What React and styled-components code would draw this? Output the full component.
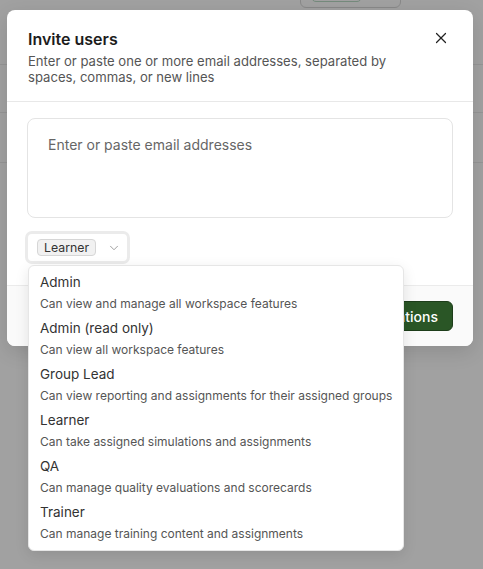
import React from 'react';
import styled, { createGlobalStyle } from 'styled-components';
import { X, ChevronDown } from 'lucide-react';

const GlobalStyle = createGlobalStyle`
  * { box-sizing: border-box; }
  body {
    margin: 0;
    font-family: Inter, "Noto Sans", "Liberation Sans", sans-serif;
    -webkit-font-smoothing: antialiased;
  }
`;

const Page = styled.div`
  position: relative;
  width: 483px;
  height: 569px;
  overflow: hidden;
  background: #fff;
`;

const TopBar = styled.div`
  display: flex;
  justify-content: flex-end;
  padding-right: 82px;
  margin-top: -28px;
`;

const ToolbarBox = styled.div`
  width: 101px;
  height: 36px;
  border: 1px solid #d9d9d9;
  border-radius: 6px;
  padding: 0 0 5px 10px;
  display: flex;
  align-items: flex-end;
`;

const StatusPill = styled.div`
  width: 51px;
  height: 20px;
  border: 1px solid #b9dcc4;
  border-radius: 5px;
`;

const TableRow = styled.div`
  height: ${p => p.$h}px;
  border-bottom: 1px solid #ececec;
`;

const Overlay = styled.div`
  position: absolute;
  inset: 0;
  background: rgba(0, 0, 0, 0.37);
`;

const Modal = styled.div`
  position: absolute;
  left: 7px;
  top: 10px;
  width: 466px;
  background: #fff;
  border-radius: 8px;
  box-shadow: 0 6px 20px rgba(0, 0, 0, 0.12);
`;

const Header = styled.div`
  display: flex;
  justify-content: space-between;
  align-items: flex-start;
  padding: 17px 20px 16px 21px;
  border-bottom: 1px solid #e8e8e8;
`;

const Title = styled.h2`
  margin: 0;
  font-size: 16px;
  line-height: 24px;
  font-weight: 600;
  color: #1c1c1c;
`;

const Subtitle = styled.p`
  margin: 2px 0 0;
  font-size: 13.1px;
  line-height: 16px;
  color: #555;
  max-width: 395px;
`;

const CloseButton = styled.button`
  width: 24px;
  height: 24px;
  margin-top: -1px;
  padding: 0;
  border: none;
  background: none;
  display: flex;
  align-items: center;
  justify-content: center;
  color: #222;
  cursor: pointer;
`;

const Body = styled.div`
  padding: 16px 20px 21px;
`;

const EmailInput = styled.textarea`
  display: block;
  width: 100%;
  height: 100px;
  resize: none;
  border: 1px solid #e4e4e4;
  border-radius: 8px;
  padding: 16px 20px;
  font-family: inherit;
  font-size: 14px;
  line-height: 20px;
  color: #222;
  outline: none;

  &::placeholder {
    color: #666;
  }
`;

const RoleSelect = styled.div`
  position: relative;
  margin: 13px 0 0 -2px;
  width: 105px;
  height: 33px;
`;

const Trigger = styled.button`
  display: flex;
  align-items: center;
  gap: 11px;
  width: 105px;
  height: 33px;
  padding: 0 9px;
  border: 3px solid #ebebeb;
  border-radius: 7px;
  background: #fff;
  font-family: inherit;
  cursor: pointer;

  svg {
    flex-shrink: 0;
  }
`;

const Badge = styled.span`
  display: inline-flex;
  align-items: center;
  flex-shrink: 0;
  height: 17px;
  padding: 0 6px;
  border: 1px solid #d6d6d6;
  border-radius: 4px;
  background: #f1f1f1;
  font-size: 12.3px;
  color: #333;
`;

const Menu = styled.div`
  position: absolute;
  top: 34px;
  left: 3px;
  width: 376px;
  padding: 3px 0 5px;
  background: #fff;
  border: 1px solid #e6e6e6;
  border-radius: 6px;
  box-shadow: 0 4px 14px rgba(0, 0, 0, 0.1);
  z-index: 2;
`;

const MenuItem = styled.div`
  padding: 3px 11px 1px;
  cursor: pointer;
`;

const ItemTitle = styled.div`
  font-size: 13.5px;
  line-height: 20px;
  color: #333;
`;

const ItemDesc = styled.div`
  margin-top: 2px;
  font-size: 12px;
  line-height: 20px;
  color: #555;
  white-space: nowrap;
`;

const Footer = styled.div`
  display: flex;
  justify-content: flex-end;
  padding: 15px 20px;
  background: #fafafa;
  border-top: 1px solid #ebebeb;
  border-radius: 0 0 8px 8px;
`;

const PrimaryButton = styled.button`
  height: 30px;
  padding: 0 14px;
  border: 1px solid #1d3d1a;
  border-radius: 6px;
  background: #2a5626;
  color: #fff;
  font-family: inherit;
  font-size: 14px;
  font-weight: 500;
  cursor: pointer;
`;

const roles = [
  { name: 'Admin', desc: 'Can view and manage all workspace features' },
  { name: 'Admin (read only)', desc: 'Can view all workspace features' },
  { name: 'Group Lead', desc: 'Can view reporting and assignments for their assigned groups' },
  { name: 'Learner', desc: 'Can take assigned simulations and assignments' },
  { name: 'QA', desc: 'Can manage quality evaluations and scorecards' },
  { name: 'Trainer', desc: 'Can manage training content and assignments' },
];

export default function App() {
  return (
    <Page>
      <GlobalStyle />
      <TopBar>
        <ToolbarBox>
          <StatusPill />
        </ToolbarBox>
      </TopBar>
      <TableRow $h={57} />
      <TableRow $h={48} />
      <TableRow $h={50} />
      <Overlay />

      <Modal>
        <Header>
          <div>
            <Title>Invite users</Title>
            <Subtitle>
              Enter or paste one or more email addresses, separated by spaces, commas, or new lines
            </Subtitle>
          </div>
          <CloseButton aria-label="Close">
            <X size={18} strokeWidth={1.6} />
          </CloseButton>
        </Header>

        <Body>
          <EmailInput placeholder="Enter or paste email addresses" />
          <RoleSelect>
            <Trigger>
              <Badge>Learner</Badge>
              <ChevronDown size={14} strokeWidth={1.4} color="#8a8a8a" />
            </Trigger>
            <Menu>
              {roles.map(r => (
                <MenuItem key={r.name}>
                  <ItemTitle>{r.name}</ItemTitle>
                  <ItemDesc>{r.desc}</ItemDesc>
                </MenuItem>
              ))}
            </Menu>
          </RoleSelect>
        </Body>

        <Footer>
          <PrimaryButton>Send invitations</PrimaryButton>
        </Footer>
      </Modal>
    </Page>
  );
}
